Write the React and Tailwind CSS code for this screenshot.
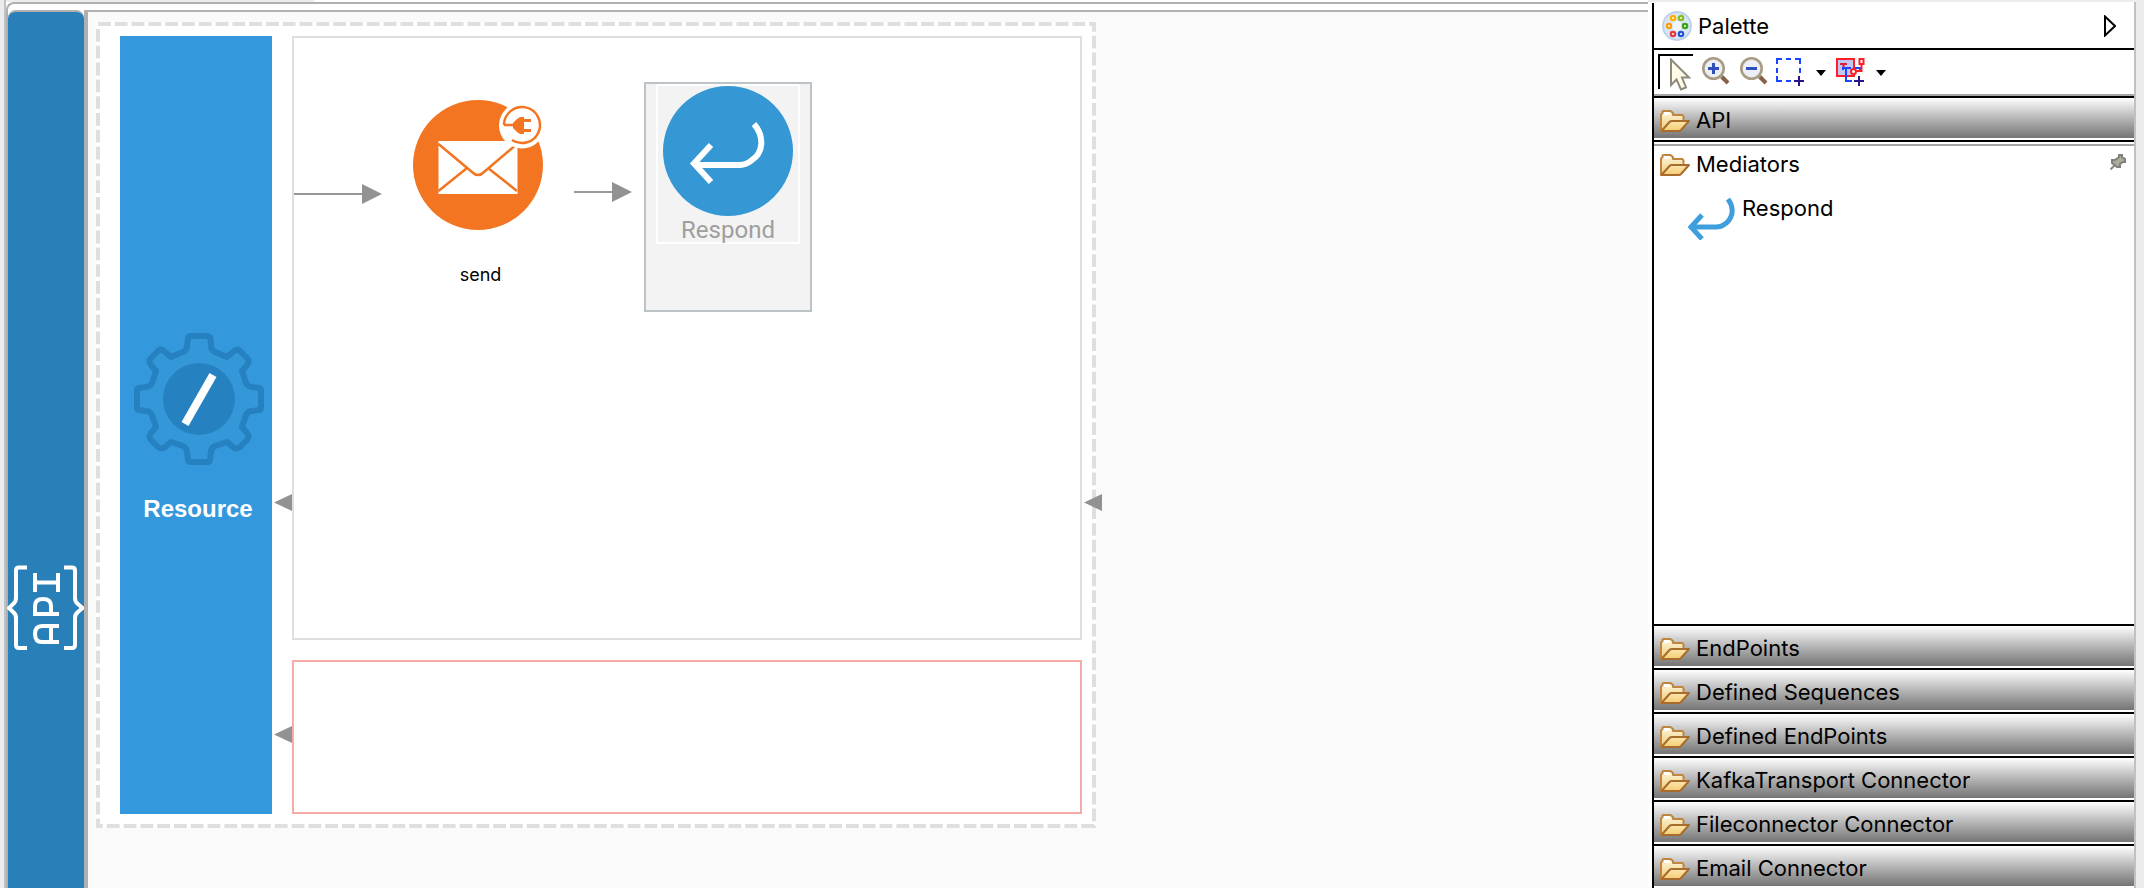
import React from "react";

const FONT = "font-['Inter','Liberation_Sans',sans-serif]";

function FolderIcon() {
  return (
    <svg viewBox="0 0 30 22" className="h-[22px] w-[30px] shrink-0" aria-hidden="true">
      <defs>
        <linearGradient id="folderBack" x1="0" y1="0" x2="0" y2="1">
          <stop offset="0" stopColor="#fdf6dc" />
          <stop offset="1" stopColor="#f0cb78" />
        </linearGradient>
        <linearGradient id="folderFront" x1="0" y1="0" x2="0" y2="1">
          <stop offset="0" stopColor="#fbe7b0" />
          <stop offset="1" stopColor="#f5cd72" />
        </linearGradient>
      </defs>
      <path d="M1 21V4.500L2.500 3V1.500L4 1H10.500L13 3V5H22.500L23.500 6.500V14L6 21Z" fill="url(#folderBack)" stroke="#c08540" strokeWidth="2" strokeLinejoin="round" />
      <path d="M4 3.500H10" stroke="#ffffff" strokeWidth="3" />
      <path d="M1.500 21L9.500 12Q10.500 11 12 11H29L21 20Q20 21 19 21Z" fill="url(#folderFront)" stroke="#a86c2c" strokeWidth="2" strokeLinejoin="round" />
    </svg>
  );
}

function Drawer({ label }) {
  return (
    <button type="button" className="flex h-[44px] w-full shrink-0 flex-col text-left">
      <span className="h-[2px] w-full bg-black" />
      <span className="flex h-[40px] w-full items-center gap-[6px] bg-linear-to-b from-white to-[#757575] pl-[6px] text-[22px] leading-[40px]">
        <span className="pt-[6px]"><FolderIcon /></span>
        <span className="pt-[4px]">{label}</span>
      </span>
    </button>
  );
}

function Magnifier({ plus }) {
  return (
    <svg viewBox="0 0 28 28" className="h-[28px] w-[28px]" aria-hidden="true">
      <path d="M18 18L22 22" stroke="#b0a48c" strokeWidth="4" />
      <path d="M20 20L26 26" stroke="#866049" strokeWidth="4" />
      <circle cx="11.500" cy="11.500" r="10.200" fill="#eceff6" stroke="#a89c84" strokeWidth="2.600" />
      <path d="M6 11.500H17" stroke="#2f50b8" strokeWidth="3" />
      {plus && <path d="M11.500 6V17" stroke="#2f50b8" strokeWidth="3" />}
    </svg>
  );
}

function Caret() {
  return (
    <svg viewBox="0 0 10 6" className="h-[6px] w-[10px]" aria-hidden="true"><path d="M0 0H10L5 6Z" /></svg>
  );
}

function Toolbar() {
  return (
    <div className="flex h-[44px] items-start pl-[4px] pt-[4px]" role="toolbar" aria-label="Palette tools">
      <button type="button" aria-label="Select" className="h-[35px] w-[35px] border-l-2 border-t-2 border-black pl-[9px] pt-[2px]">
        <svg viewBox="0 0 22 34" className="h-[34px] w-[22px]" aria-hidden="true">
          <path d="M2 1.500V27L7.500 21.500L12 31.500L17 29.500L13 19.500H20Z" fill="#fffbe6" stroke="#8e897c" strokeWidth="2" />
        </svg>
      </button>
      <button type="button" aria-label="Zoom in" className="ml-[9px] mt-[3px]"><Magnifier plus /></button>
      <button type="button" aria-label="Zoom out" className="ml-[10px] mt-[3px]"><Magnifier /></button>
      <button type="button" aria-label="Marquee" className="ml-[8px] mt-[4px]">
        <svg viewBox="0 0 30 30" className="h-[30px] w-[30px]" aria-hidden="true">
          <path d="M1 6V1H6M10 1H15M19 1H24V6M24 10V15M1 10V15M1 18V23H6M10 23H15" fill="none" stroke="#1846ff" strokeWidth="2" />
          <path d="M18 23H28M23 18V28" stroke="#2a1288" strokeWidth="2" />
        </svg>
      </button>
      <button type="button" aria-label="Marquee options" className="ml-[10px] mt-[16px] flex"><Caret /></button>
      <button type="button" aria-label="Connections" className="ml-[10px] mt-[4px]">
        <svg viewBox="0 0 30 30" className="h-[30px] w-[30px]" aria-hidden="true">
          <rect x="1" y="1" width="17" height="17" fill="#c2c6f5" stroke="#ff1e28" strokeWidth="2" />
          <path d="M4 6H11M7.500 6V11" stroke="#d8203c" strokeWidth="2" fill="none" />
          <path d="M7 12V10H15M10 10V23H16M19 10H24V14" stroke="#1846ff" strokeWidth="2" fill="none" />
          <path d="M25.500 6V13H20" stroke="#ff1e28" strokeWidth="2" fill="none" />
          <circle cx="17.500" cy="13.500" r="2.500" fill="#fff" stroke="#ff1e28" strokeWidth="2" />
          <rect x="23.500" y="1" width="4" height="5" fill="#fff" stroke="#ff1e28" strokeWidth="2" />
          <path d="M18 23H28M23 18V28" stroke="#2a1288" strokeWidth="2" />
        </svg>
      </button>
      <button type="button" aria-label="Connection options" className="ml-[10px] mt-[16px] flex"><Caret /></button>
    </div>
  );
}

function PaletteIcon() {
  const dots = [
    [11, 7, "#ffb000"], [19, 7, "#86bc28"], [7, 15, "#f8a010"],
    [23, 15, "#38a41e"], [11, 23, "#e03a48"], [19, 23, "#2458dc"],
  ];
  return (
    <svg viewBox="0 0 30 30" className="h-[30px] w-[30px]" aria-hidden="true">
      <circle cx="15" cy="15" r="14" fill="#dbe6f4" stroke="#bcd2ea" strokeWidth="2" />
      <circle cx="15" cy="15" r="5" fill="#f0f5fb" />
      {dots.map(([x, y, c]) => (
        <circle key={c} cx={x} cy={y} r="2.200" fill="#fff4c8" stroke={c} strokeWidth="2.200" />
      ))}
    </svg>
  );
}

function Palette() {
  return (
    <aside className="flex w-[496px] shrink-0 flex-col bg-white">
      <div className="h-[2px] bg-[#ececec]" />
      <div className="flex flex-1 bg-[#ececec]">
        <div className="flex flex-1 border-r-2 border-[#bcc3c7] bg-white pl-[4px]">
          <div className="mt-px flex flex-1 flex-col border-l-2 border-black">
            <header className="flex h-[47px] items-center border-b-2 border-black pl-[8px] pr-[18px]">
              <PaletteIcon />
              <h1 className="ml-[6px] flex-1 text-[22px] leading-[28px]">Palette</h1>
              <button type="button" aria-label="Collapse palette">
                <svg viewBox="0 0 12 22" className="h-[22px] w-[12px]" aria-hidden="true"><path d="M1 1.500V20.500L11 11Z" fill="#fff" stroke="#000" strokeWidth="2" /></svg>
              </button>
            </header>
            <Toolbar />
            <div className="h-[2px] bg-[#a6a6a6]" />
            <Drawer label="API" />
            <div className="h-[2px] bg-black" />
            <section className="mt-[2px] flex flex-1 flex-col border-t-2 border-[#a6a6a6]">
              <div className="flex items-start gap-[6px] pl-[6px] pr-[8px] text-[22px]">
                <span className="mt-[8px]"><FolderIcon /></span>
                <h2 className="mt-[4px] flex-1 leading-[28px]">Mediators</h2>
                <button type="button" aria-label="Pin drawer" className="mt-[8px]">
                  <svg viewBox="0 0 16 16" className="h-[16px] w-[16px]" aria-hidden="true">
                    <path d="M0.500 15.500L5 11" stroke="#8a8a84" strokeWidth="2" />
                    <path d="M9 1H12V3L15 5V8H13L10 10V13H7L2 9V6H5L9 3Z" fill="#aeab9a" stroke="#7e7f7e" strokeWidth="2" />
                  </svg>
                </button>
              </div>
              <button type="button" className="flex items-start gap-[7px] pl-[33px] text-left text-[22px] leading-[28px]">
                <svg viewBox="0 0 48 42" className="mt-[20px] h-[42px] w-[48px]" fill="none" stroke="#3f9fdc" strokeWidth="5" aria-hidden="true">
                  <path d="M41 1C49 12 44 22 38 26Q34 29 29 29H4" />
                  <path d="M15 17L4 29L15 41" />
                </svg>
                <span className="mt-[16px]">Respond</span>
              </button>
            </section>
            {["EndPoints", "Defined Sequences", "Defined EndPoints", "KafkaTransport Connector", "Fileconnector Connector", "Email Connector"].map((l) => (
              <Drawer key={l} label={l} />
            ))}
          </div>
        </div>
        <div className="w-[8px]" />
      </div>
    </aside>
  );
}

function ApiMark() {
  return (
    <svg viewBox="0 0 78 86" className="h-[86px] w-[78px] shrink-0" fill="none" stroke="#fff" strokeWidth="4" role="img" aria-label="API">
      <path d="M20 2.500H12Q9 2.500 9 5.500V33Q9 37 6 39L2 43L6 47Q9 49 9 53V80Q9 83 12 83H20" />
      <path d="M57 2.500H65Q68 2.500 68 5.500V33Q68 37 71 39L75.500 43L71 47Q68 49 68 53V80Q68 83 65 83H57" />
      <path d="M28 8V27M51 8V27M28 17.500H51" />
      <path d="M52 49H28V41Q28 34 36 34Q44 34 44 41V49" />
      <path d="M52 61H35Q28 61 28 69Q28 77 35 77H52M44 61V77" />
    </svg>
  );
}

function GearIcon() {
  return (
    <svg viewBox="-66 -66 132 132" className="h-[132px] w-[132px]" aria-hidden="true">
      <path
        d="M-8-63H8Q11-63 11.500-60L12-53Q12-49 16-47L28-42L34-47Q38-51 41-48L48-41Q51-38 48-34L43-28L47-16Q49-12 53-12L60-11Q62-11 62-8V8Q62 11 60 11L53 12Q49 12 47 16L43 28L48 34Q51 38 48 41L41 48Q38 51 34 48L28 43L16 47Q12 49 12 53L11 60Q11 63 8 63H-8Q-11 63-11 60L-12 53Q-12 49-16 47L-28 43L-34 48Q-38 51-41 48L-48 41Q-51 38-48 34L-43 28L-47 16Q-49 12-53 12L-60 11Q-62 11-62 8V-8Q-62-11-60-11L-53-12Q-49-12-47-16L-43-28L-48-34Q-51-38-48-41L-41-48Q-38-51-34-47L-28-42L-16-47Q-12-49-12-53L-11-60Q-11-63-8-63Z"
        fill="#3498d8" stroke="#2581c0" strokeWidth="6" strokeLinejoin="round" />
      <circle r="36" fill="#2581bf" />
      <path d="M-14 25L14-24" stroke="#fff" strokeWidth="8" />
    </svg>
  );
}

function SendIcon() {
  return (
    <svg viewBox="0 0 132 132" className="h-[132px] w-[132px]" aria-hidden="true">
      <circle cx="66" cy="66" r="65" fill="#f47521" />
      <rect x="26.500" y="42" width="79" height="53" fill="#fff" />
      <path d="M26.500 45L60 73Q66 79 72 73L105 45M26.500 92L55 69M105 92L76 69" fill="none" stroke="#f47521" strokeWidth="2.500" />
      <circle cx="110" cy="26.500" r="23" fill="#fff" />
      <path d="M92 26A18 18 0 1 1 100 41M92 26H102" fill="none" stroke="#f47521" strokeWidth="2.500" />
      <path d="M101 24L105 20L108 18H112V35H108L105 33L101 29ZM112 20H119V23H112ZM112 30H119V33H112Z" fill="#f47521" />
    </svg>
  );
}

function RespondIcon() {
  return (
    <svg viewBox="-65 -65 130 130" className="h-[130px] w-[130px] shrink-0" aria-hidden="true">
      <circle r="65" fill="#3598d5" />
      <path d="M26-27C37-14 35 2 24 9Q18 14 12 14H-33M-17-6L-34 12.500L-17 31" fill="none" stroke="#fff" strokeWidth="6" />
    </svg>
  );
}

function FlowArrow({ length }) {
  return (
    <svg width={length} height="20" className="shrink-0" aria-hidden="true">
      <path d={`M0 10H${length - 18}`} stroke="#989898" strokeWidth="2" />
      <path d={`M${length - 20} 0L${length} 10L${length - 20} 20Z`} fill="#929292" />
    </svg>
  );
}

function BackArrow({ className }) {
  return (
    <svg viewBox="0 0 18 17" className={`absolute h-[17px] w-[18px] ${className}`} aria-hidden="true">
      <path d="M0 8.500L18 0V17Z" fill="#929292" />
    </svg>
  );
}

function DashedFrame() {
  const d = { stroke: "#dfdfdf", strokeWidth: 4, strokeDasharray: "12.8 4" };
  return (
    <svg className="pointer-events-none absolute inset-0 h-full w-full" aria-hidden="true">
      <line x1="2" y1="2" x2="100%" y2="2" {...d} />
      <line x1="2" y1="7" x2="2" y2="100%" {...d} />
      <line x1="99.800%" y1="0" x2="99.800%" y2="100%" {...d} strokeDashoffset="3" />
      <line x1="0" y1="99.752%" x2="100%" y2="99.752%" {...d} strokeDashoffset="6" />
    </svg>
  );
}

function Diagram() {
  return (
    <div className="relative ml-[8px] mt-[10px] flex w-[1000px] bg-white py-[14px] pl-[24px] pr-[14px]">
      <DashedFrame />
      <div className="flex w-[152px] flex-col items-center bg-[#3498dc] pt-[297px]">
        <div className="pl-[6px]"><GearIcon /></div>
        <div className="mt-[30px] pl-[4px] font-['Liberation_Sans',Arial,sans-serif] text-[24px] leading-[28px] font-bold text-white">Resource</div>
      </div>
      <div className="ml-[20px] flex flex-1 flex-col gap-[20px]">
        <section className="relative flex h-[604px] items-start border-2 border-[#dfdfdf] bg-white">
          <BackArrow className="-left-[20px] top-[456px]" />
          <BackArrow className="-right-[22px] top-[456px]" />
          <div className="mt-[146px]"><FlowArrow length={88} /></div>
          <div className="ml-[29px] mt-[61px] flex w-[134px] flex-col items-center">
            <SendIcon />
            <span className="mt-[32px] pl-[5px] text-[18px] leading-[24px]">send</span>
          </div>
          <div className="ml-[29px] mt-[144px]"><FlowArrow length={58} /></div>
          <div className="ml-[12px] mt-[44px] flex h-[230px] w-[168px] flex-col items-center border-2 border-[#bcc3c7] bg-[#f3f3f3]">
            <div className="flex h-[160px] w-[144px] flex-col items-center border-2 border-white">
              <RespondIcon />
              <span className="font-[Roboto,sans-serif] text-[24px] leading-[28px] text-[#9e9e9e]">Respond</span>
            </div>
          </div>
        </section>
        <section className="relative h-[154px] border-2 border-[#f5aca8] bg-white">
          <BackArrow className="-left-[20px] top-[64px]" />
        </section>
      </div>
    </div>
  );
}

export default function App() {
  return (
    <div className={`flex min-h-screen text-black ${FONT}`}>
      <div className="w-[6px] shrink-0 border-r-2 border-[#bcc3c7] bg-[#ececec]" />
      <main className="flex min-w-0 flex-1 flex-col">
        <div className="h-[2px] w-[308px] bg-[#ececec]" />
        <div className="flex flex-1 flex-col rounded-tl-[8px] border-l-2 border-t-2 border-[#b0b0b0] bg-white pt-[6px]">
          <div className="flex flex-1">
            <div className="flex w-[76px] shrink-0 flex-col items-center rounded-t-[8px] border-t-2 border-[#b0b0b0] bg-[#2980b9] pt-[553px]">
              <ApiMark />
            </div>
            <div className="flex flex-1 items-stretch bg-[#fafafa]">
              <div className="w-[4px] shrink-0 bg-[#b0b0b0]" />
              <div className="flex-1 border-t-2 border-[#b0b0b0]">
                <Diagram />
              </div>
            </div>
          </div>
        </div>
      </main>
      <Palette />
    </div>
  );
}
